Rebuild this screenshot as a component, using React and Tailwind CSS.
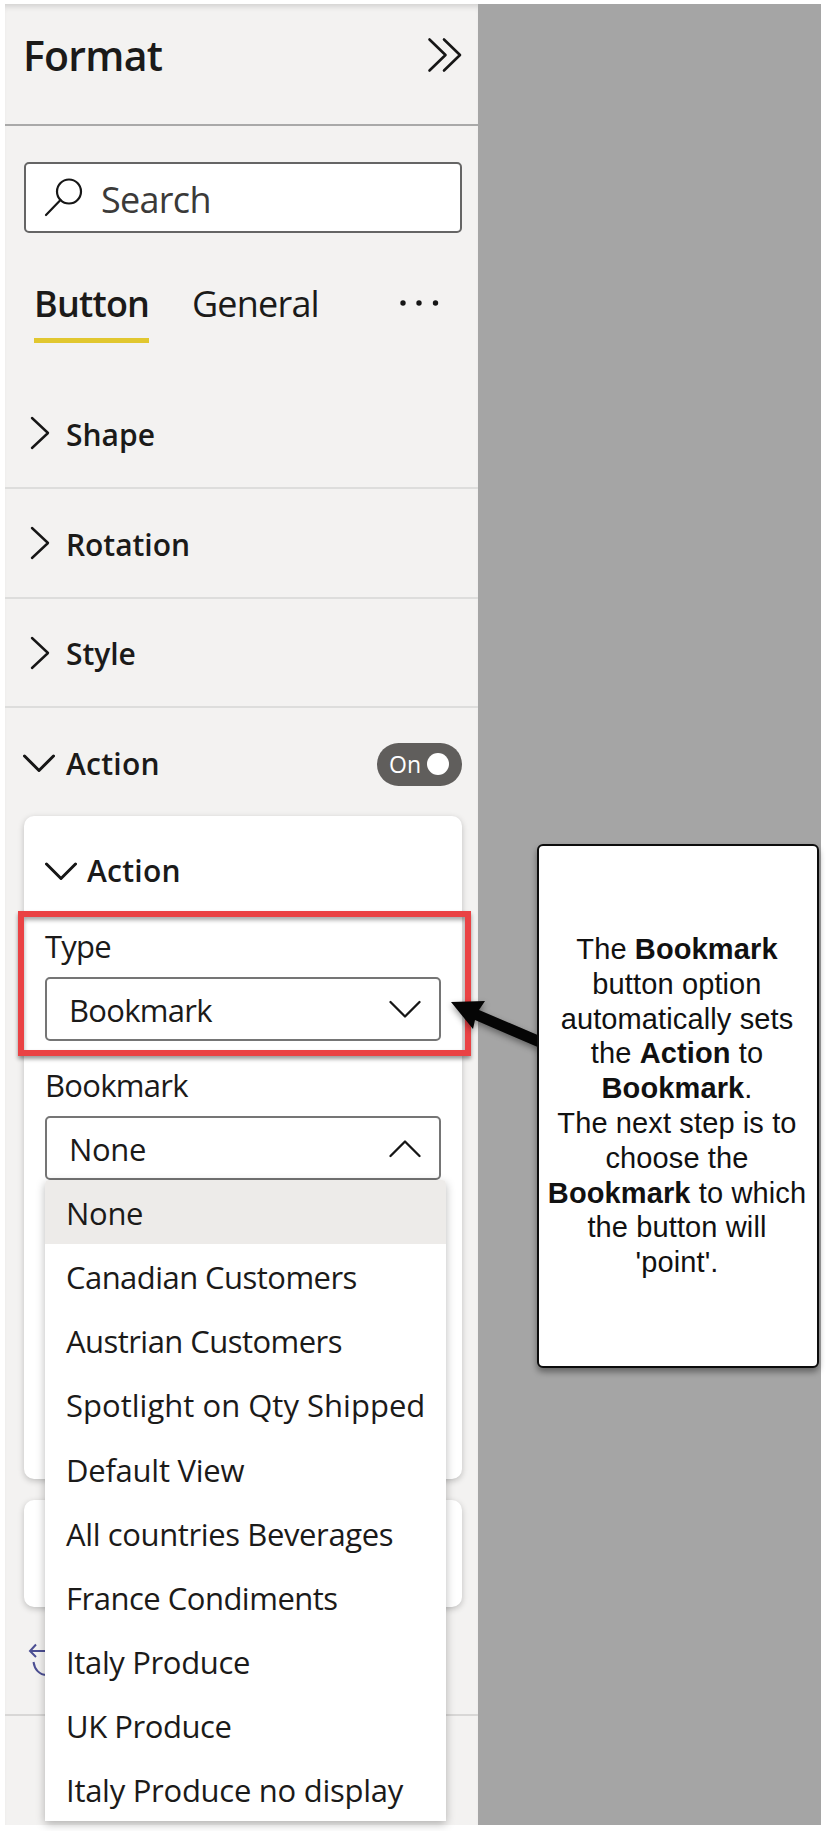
const BOOKMARKS = [
  { name: "None", spacing: "tracking-[-0.3px]" },
  { name: "Canadian Customers", spacing: "tracking-[-0.55px]" },
  { name: "Austrian Customers", spacing: "tracking-[-0.55px]" },
  { name: "Spotlight on Qty Shipped", spacing: "tracking-[0.02px]" },
  { name: "Default View", spacing: "tracking-[-0.25px]" },
  { name: "All countries Beverages", spacing: "tracking-[-0.38px]" },
  { name: "France Condiments", spacing: "tracking-[-0.5px]" },
  { name: "Italy Produce", spacing: "tracking-[-0.35px]" },
  { name: "UK Produce", spacing: "tracking-[-0.45px]" },
  { name: "Italy Produce no display", spacing: "tracking-[-0.27px]" },
];

function ChevronRight() {
  return (
    <svg className="ml-[25px] h-[34px] w-[20px] shrink-0" viewBox="0 0 20 34" fill="none" stroke="#161616" strokeWidth="2.4" strokeLinecap="round" strokeLinejoin="round">
      <path d="M2 2 L18 17 L2 32" />
    </svg>
  );
}

function ChevronDown({ className, strokeWidth = 3 }) {
  return (
    <svg className={className} viewBox="0 0 32 19" fill="none" stroke="#161616" strokeWidth={strokeWidth} strokeLinecap="round" strokeLinejoin="round">
      <path d="M1.5 2 L16 16.5 L30.5 2" />
    </svg>
  );
}

function Section({ title, className, spacing }) {
  return (
    <div className={`flex shrink-0 items-center border-b-2 border-[#dddddc] ${className}`}>
      <ChevronRight />
      <span className={`ml-[16px] mt-[3px] text-[30px] leading-[40px] font-semibold ${spacing}`}>{title}</span>
    </div>
  );
}

function Select({ value, open, spacing }) {
  return (
    <div className="flex h-[64px] w-[396px] shrink-0 items-center justify-between rounded-[5px] border-2 border-[#757575] bg-white pr-[18px] pl-[22px]">
      <span className={`mt-[1px] text-[31px] leading-[42px] ${spacing}`}>{value}</span>
      <ChevronDown className={`h-[19px] w-[32px] ${open ? "rotate-180" : ""}`} strokeWidth={2.3} />
    </div>
  );
}

function BookmarkMenu() {
  return (
    <ul className="absolute top-[1176px] left-[40px] h-[641px] w-[401px] overflow-hidden rounded-t-[4px] bg-white shadow-[0_3px_10px_rgba(0,0,0,0.28)]">
      {BOOKMARKS.map((b, i) => (
        <li key={b.name} className={`flex h-[64.15px] items-center pl-[21px] whitespace-nowrap ${i === 0 ? "bg-[#edebe9]" : ""}`}>
          <span className={`mt-[2px] text-[31px] leading-[42px] ${b.spacing}`}>{b.name}</span>
        </li>
      ))}
    </ul>
  );
}

function FormatPane() {
  return (
    <aside className="relative flex h-[1821px] w-[473px] flex-col bg-[#f3f2f1] shadow-[inset_0_6px_6px_-4px_rgba(0,0,0,0.16)]">
      <header className="flex h-[122px] shrink-0 items-start justify-between border-b-2 border-[#a9a9a9] pr-[16px] pl-[18px]">
        <h1 className="mt-[23px] text-[41px] leading-[56px] font-semibold tracking-[-0.75px]">Format</h1>
        <svg className="mt-[33px] h-[36px] w-[36px]" viewBox="0 0 36 36" fill="none" stroke="#161616" strokeWidth="2.6" strokeLinecap="round" strokeLinejoin="round">
          <path d="M3.5 2.5 L19.5 18 L3.5 33.5 M18 2.5 L34 18 L18 33.5" />
        </svg>
      </header>

      <div className="mt-[36px] ml-[19px] flex h-[71px] w-[438px] shrink-0 items-center rounded-[5px] border-2 border-[#656565] bg-white pl-[17px]">
        <svg className="mb-[2px] h-[40px] w-[40px]" viewBox="0 0 40 40" fill="none" stroke="#161616" strokeWidth="2.2" strokeLinecap="round">
          <circle cx="26" cy="14.5" r="12" />
          <path d="M17.5 23 L3 38" />
        </svg>
        <span className="mt-[5px] ml-[18px] text-[36px] leading-[48px] tracking-[-0.7px] text-[#3b3a39]">Search</span>
      </div>

      <nav className="mt-[45px] flex h-[65px] shrink-0 items-start pl-[29px]">
        <div className="h-[65px] w-[115px] border-b-[5px] border-[#e1c72f]">
          <span className="block text-[36px] leading-[52px] font-semibold tracking-[-0.8px]">Button</span>
        </div>
        <span className="ml-[43px] w-[128px] text-[36px] leading-[52px] tracking-[-0.8px]">General</span>
        <svg className="mt-[21px] ml-[78px] h-[8px] w-[44px]" viewBox="0 0 44 8" fill="#161616">
          <circle cx="5" cy="4" r="2.7" />
          <circle cx="21" cy="4" r="2.7" />
          <circle cx="37.5" cy="4" r="2.7" />
        </svg>
      </nav>

      <Section title="Shape" className="mt-[36px] h-[110px]" spacing="tracking-[0px]" />
      <Section title="Rotation" className="h-[110px]" spacing="tracking-[-0.05px]" />
      <Section title="Style" className="h-[109px]" spacing="tracking-[-0.05px]" />

      <div className="flex h-[108px] shrink-0 items-center pr-[16px] pl-[18px]">
        <ChevronDown className="mt-[3px] h-[19px] w-[32px]" />
        <span className="mt-[4px] ml-[11px] flex-1 text-[30px] leading-[40px] font-semibold tracking-[0.25px]">Action</span>
        <div className="mt-[4px] flex h-[43px] w-[85px] items-center rounded-full bg-[#605e5c] pl-[12px] text-white">
          <span className="w-[38px] text-[23px] leading-[32px]">On</span>
          <span className="h-[22px] w-[22px] rounded-full bg-white" />
        </div>
      </div>

      <section className="ml-[19px] flex h-[663px] w-[438px] shrink-0 flex-col rounded-[10px] bg-white pl-[21px] shadow-[0_2px_6px_rgba(0,0,0,0.22)]">
        <div className="mt-[35px] flex h-[40px] shrink-0 items-center">
          <ChevronDown className="h-[19px] w-[32px]" />
          <span className="ml-[10px] text-[30px] leading-[40px] font-semibold tracking-[0.25px]">Action</span>
        </div>
        <label className="mt-[34px] h-[52px] text-[31px] leading-[42px] tracking-[-0.8px]">Type</label>
        <Select value="Bookmark" spacing="tracking-[-0.7px]" />
        <label className="mt-[23px] h-[52px] text-[31px] leading-[42px] tracking-[-0.7px]">Bookmark</label>
        <Select value="None" open spacing="tracking-[-0.35px]" />
      </section>

      <section className="mt-[21px] ml-[19px] h-[107px] w-[438px] shrink-0 rounded-[10px] bg-white shadow-[0_2px_6px_rgba(0,0,0,0.22)]" />

      <div className="flex h-[109px] shrink-0 items-start border-b-2 border-[#d8d7d6] pl-[23px]">
        <svg className="mt-[36px] h-[36px] w-[36px]" viewBox="0 0 36 36" fill="none" stroke="#4c4f93" strokeWidth="2">
          <path d="M8 1.500 L2 8 L8 14 M2 8 H24 M5.500 19 C6.500 26 11 32 19 32 C26 32 31 27 31 20 C31 13 27 8 21 8" />
        </svg>
      </div>

      <BookmarkMenu />
    </aside>
  );
}

function Callout() {
  return (
    <div className="absolute top-[844px] left-[537px] flex h-[524px] w-[282px] items-center justify-center rounded-[6px] border-2 border-[#0c0c0c] bg-white pr-[2px] text-center font-['Liberation_Sans',Arial,sans-serif] text-[29px] leading-[34.8px] tracking-[0.12px] text-[#111111] shadow-[0_4px_6px_rgba(0,0,0,0.4)]">
      <p className="whitespace-nowrap">
        The <b>Bookmark</b><br />
        button option<br />
        automatically sets<br />
        the <b>Action</b> to<br />
        <b>Bookmark</b>.<br />
        The next step is to<br />
        choose the<br />
        <b>Bookmark</b> to which<br />
        the button will<br />
        'point'.
      </p>
    </div>
  );
}

export default function App() {
  return (
    <main className="relative flex h-[1831px] w-[827px] overflow-hidden bg-white pt-[4px] pl-[5px] font-['Open_Sans','Noto_Sans',sans-serif] text-[#1b1a19]">
      <FormatPane />
      <div className="h-[1821px] w-[343px] bg-[#a5a5a5]" />
      <div className="absolute top-[911px] left-[18px] h-[145px] w-[453px] border-[6px] border-[#ea4244] shadow-[0_3px_4px_rgba(0,0,0,0.4),inset_0_3px_4px_rgba(0,0,0,0.35)]" />
      <svg className="absolute top-[990px] left-[440px] h-[70px] w-[110px] drop-shadow-[0_3px_3px_rgba(0,0,0,0.4)]" viewBox="0 0 110 70" fill="#050505">
        <path d="M11 12 L45 11 L39 20 L100 46 L100 58 L35 30 L33 39 Z" />
      </svg>
      <Callout />
    </main>
  );
}
